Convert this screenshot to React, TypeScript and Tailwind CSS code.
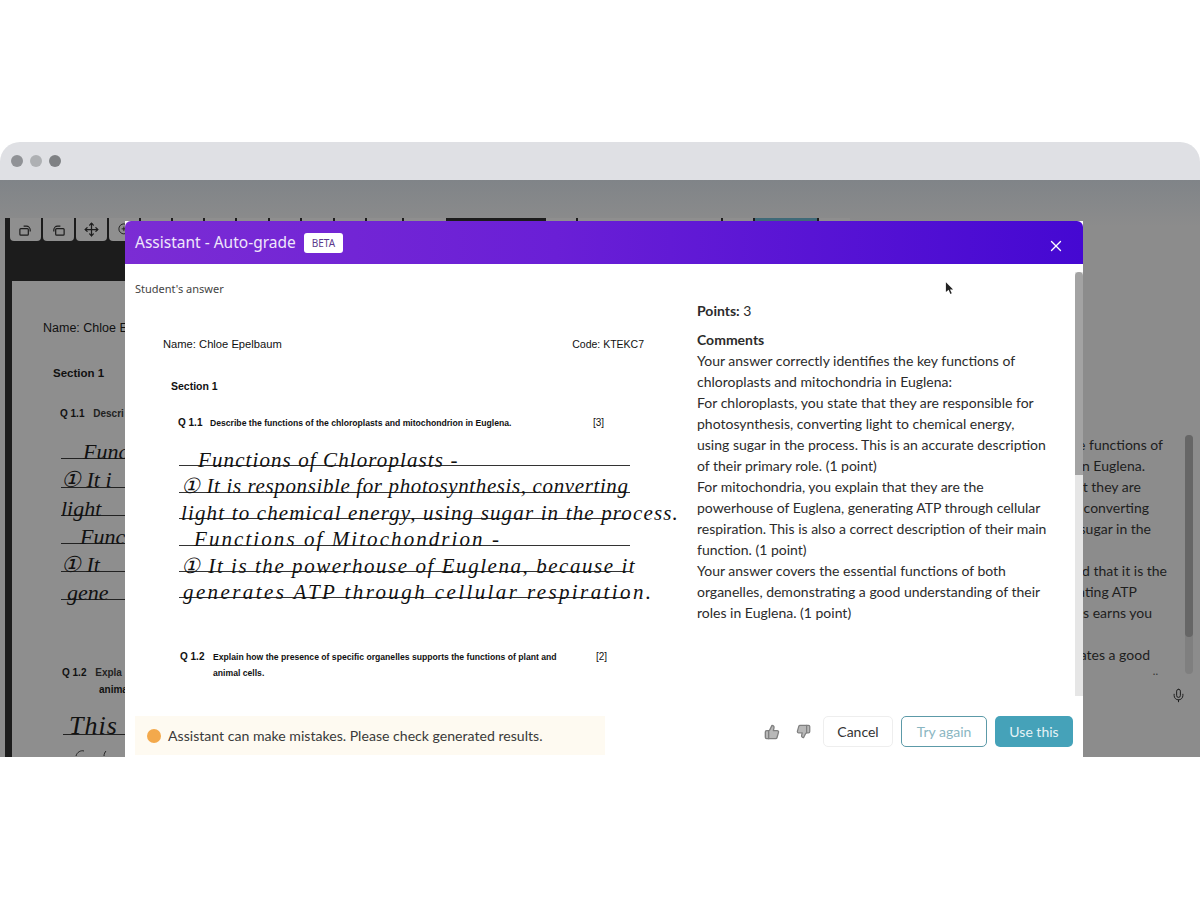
import React from 'react';
import { ThumbsDown, ThumbsUp, X, Mic, Move, ZoomIn } from 'lucide-react';

const COMMENTS = [
    'Your answer correctly identifies the key functions of',
    'chloroplasts and mitochondria in Euglena:',
    'For chloroplasts, you state that they are responsible for',
    'photosynthesis, converting light to chemical energy,',
    'using sugar in the process. This is an accurate description',
    'of their primary role. (1 point)',
    'For mitochondria, you explain that they are the',
    'powerhouse of Euglena, generating ATP through cellular',
    'respiration. This is also a correct description of their main',
    'function. (1 point)',
    'Your answer covers the essential functions of both',
    'organelles, demonstrating a good understanding of their',
    'roles in Euglena. (1 point)',
];

const HANDWRITING = [
    { text: 'Functions of Chloroplasts -', className: 'pl-[19px] tracking-[1.1px]' },
    { text: '① It is responsible for photosynthesis, converting', className: 'pl-[2px] tracking-[0.62px]' },
    { text: 'light to chemical energy, using sugar in the process.', className: 'pl-[2px] tracking-[1.15px]' },
    { text: 'Functions of Mitochondrion -', className: 'pl-[15px] tracking-[2.07px]' },
    { text: '① It is the powerhouse of Euglena, because it', className: 'pl-[2px] tracking-[1.55px]' },
    { text: 'generates ATP through cellular respiration.', className: 'pl-[4px] tracking-[2.4px]' },
];

// The lines of the page behind the modal; their left part is hidden by it
const BACKGROUND_RIGHT = [
    { text: 'the functions of', pos: 'top-[256px] right-[37px]' },
    { text: 'in Euglena.', pos: 'top-[277px] right-[55px]' },
    { text: 'that they are', pos: 'top-[298px] right-[59px]' },
    { text: 'converting', pos: 'top-[319px] right-[51px]' },
    { text: 'using sugar in the', pos: 'top-[340px] right-[49px]' },
    { text: 'said that it is the', pos: 'top-[382px] right-[33px]' },
    { text: 'generating ATP', pos: 'top-[403px] right-[63px]' },
    { text: 'this earns you', pos: 'top-[424px] right-[48px]' },
    { text: 'demonstrates a good', pos: 'top-[466px] right-[50px]' },
];

// Tabs of the viewer toolbar; only their top edge shows beside the modal
const TOOLBAR_TABS = [
    { w: 'w-[31px]', tone: 'bg-[#8f8f8f]' },
    { w: 'w-[31px]', tone: 'bg-[#8f8f8f]' },
    { w: 'w-[31px]', tone: 'bg-[#8f8f8f]' },
    { w: 'w-[30px]', tone: 'bg-[#8f8f8f]' },
    { w: 'w-[30px]', tone: 'bg-[#8f8f8f]' },
    { w: 'w-[30px]', tone: 'bg-[#8f8f8f]' },
    { w: 'w-[30px]', tone: 'bg-[#8f8f8f]' },
    { w: 'w-[31px]', tone: 'bg-[#8f8f8f]' },
    { w: 'w-[30px]', tone: 'bg-[#8f8f8f]' },
    { w: 'w-[31px]', tone: 'bg-[#8f8f8f]' },
    { w: 'w-[30px]', tone: 'bg-[#8f8f8f]' },
    { w: 'w-[35px]', tone: 'bg-[#8f8f8f]' },
    { w: 'w-[42px]', tone: 'bg-[#8f8f8f]' },
    { w: 'w-[96px]', tone: 'bg-[#1c1c1c]' },
    { w: 'w-[30px]', tone: 'bg-[#8f8f8f]' },
    { w: 'w-[143px]', tone: 'bg-[#8f8f8f]' },
    { w: 'w-[30px]', tone: 'bg-[#8f8f8f]' },
    { w: 'w-[62px]', tone: 'bg-[#3f6a78]' },
    { w: 'w-[31px]', tone: 'bg-[#8f8f8f]' },
];

const RotateIcon = ({ flip }: { flip?: boolean }) => (
    <svg
        viewBox="0 0 16 16"
        className={`h-[15px] w-[15px] ${flip ? '-scale-x-100' : ''}`}
        fill="none"
        stroke="currentColor"
        strokeWidth="1.3"
    >
        <rect x="2" y="7" width="9" height="7" rx="1" />
        <path d="M6 4.500h3a4 4 0 0 1 4 4V10" />
    </svg>
);

export default function App() {
    return (
        <div className="h-[900px] w-[1200px] overflow-hidden bg-white pt-[142px] font-['Lato',sans-serif]">
            {/* Browser frame */}
            <div className="flex h-[615px] flex-col overflow-hidden rounded-t-[20px]">
                <div className="flex h-[38px] shrink-0 items-center gap-[7px] bg-[#dfe0e4] pl-[11px]">
                    <span className="h-[12px] w-[12px] rounded-full bg-[#909296]" />
                    <span className="h-[12px] w-[12px] rounded-full bg-[#aeb0b3]" />
                    <span className="h-[12px] w-[12px] rounded-full bg-[#7f8184]" />
                </div>

                <div className="relative flex-1 overflow-hidden bg-[linear-gradient(180deg,#808488,#8c8c8c_8%)]">
                    {/* Dimmed app behind the modal */}
                    <div className="absolute top-[38px] bottom-0 left-[5px] flex w-[845px] flex-col overflow-hidden bg-[#1c1c1c]">
                        <div className="flex h-[63px] shrink-0 items-start gap-[2px] pl-[5px] text-[#1d1d1d]">
                            {TOOLBAR_TABS.map((tab, i) => (
                                <div
                                    key={i}
                                    className={`flex h-[23px] shrink-0 items-center justify-center rounded-b-[4px] ${tab.w} ${tab.tone}`}
                                >
                                    {i === 0 && <RotateIcon />}
                                    {i === 1 && <RotateIcon flip />}
                                    {i === 2 && <Move size={15} strokeWidth={2} />}
                                    {i === 3 && <ZoomIn size={15} strokeWidth={1.5} />}
                                </div>
                            ))}
                        </div>
                        <div className="ml-[7px] flex-1 bg-[#8e8e8e] font-['Liberation_Sans',sans-serif] text-[#111]">
                            <p className="pt-[38px] pl-[31px] text-[12.5px]">Name: Chloe E</p>
                            <p className="pt-[27px] pl-[41px] text-[11.5px] font-bold">Section 1</p>
                            <p className="pt-[24px] pl-[48px] text-[10px] font-bold">
                                Q 1.1 <span className="ml-[6px] text-[#222]">Descri</span>
                            </p>
                            <div className="pt-[10px] pl-[49px] font-['Liberation_Serif',serif] text-[22px] italic">
                                <p className="h-[28px] border-b border-[#222] pl-[22px] leading-[42px]">Func</p>
                                <p className="h-[28.500px] border-b border-[#222] leading-[42px]">① It i</p>
                                <p className="h-[28.500px] border-b border-[#222] leading-[42px]">light</p>
                                <p className="h-[28px] border-b border-[#222] pl-[19px] leading-[42px]">Func</p>
                                <p className="h-[28px] border-b border-[#222] leading-[42px]">① It</p>
                                <p className="h-[28px] border-b border-[#222] pl-[6px] leading-[42px]">gene</p>
                            </div>
                            <p className="pt-[65px] pl-[50px] text-[10px] font-bold">
                                Q 1.2 <span className="ml-[6px] text-[#222]">Expla</span>
                            </p>
                            <p className="pt-[2px] pl-[87px] text-[10px] font-bold">anima</p>
                            <p className="mt-[10px] ml-[51px] h-[28px] border-b border-[#222] pl-[6px] font-['Liberation_Serif',serif] text-[26px] leading-[38px] tracking-[1px] italic">
                                This
                            </p>
                            {/* Top of the next handwritten line, cut by the frame */}
                            <svg viewBox="0 0 40 8" className="mt-[14px] ml-[62px] h-[8px] w-[40px]" fill="none" stroke="#222" strokeWidth="1">
                                <path d="M2 7c1-4 5-6 8-5M30 7c0-2 1-4 2-5" />
                            </svg>
                        </div>
                    </div>

                    {/* Text on the right of the app */}
                    {BACKGROUND_RIGHT.map((row) => (
                        <p
                            key={row.text}
                            className={`absolute text-[14px] leading-[18px] whitespace-nowrap text-[#1e1e1e] ${row.pos}`}
                        >
                            {row.text}
                        </p>
                    ))}
                    <div className="absolute top-[255px] right-[7px] h-[239px] w-[8px] rounded-full bg-[#7f7f7f]">
                        <div className="h-[202px] w-[8px] rounded-full bg-[#666666]" />
                    </div>
                    <div className="absolute top-[485px] right-[42px] text-[11px] leading-none text-[#333]">..</div>
                    <Mic size={15} strokeWidth={1.6} className="absolute top-[508px] right-[14px] text-[#1d1d1d]" />

                    {/* Modal */}
                    <div className="absolute top-[41px] bottom-0 left-[125px] flex w-[958px] flex-col bg-white">
                        <div className="flex h-[43px] shrink-0 items-center rounded-t-[6px] bg-[linear-gradient(90deg,#7b2cd4,#6a1fd6_45%,#4508d2)] pr-[18px] pl-[10px] text-white">
                            <span className="font-['Noto_Sans',sans-serif] text-[15.5px] leading-none text-[#efe6fb]">
                                Assistant - Auto-grade
                            </span>
                            <span className="ml-[8px] rounded-[3px] bg-white px-[8px] py-[4px] font-['Noto_Sans',sans-serif] text-[10px] leading-[12px] text-[#5b3a8c]">
                                BETA
                            </span>
                            <X size={18} strokeWidth={1.8} className="mt-[6px] ml-auto" />
                        </div>

                        <div className="relative flex min-h-0 flex-1 flex-col">
                            <div className="flex min-h-0 flex-1">
                                {/* Scanned answer sheet */}
                                <div className="w-[562px] shrink-0 pl-[10px]">
                                    <p className="pt-[18px] font-['Noto_Sans',sans-serif] text-[11px] leading-[13px] text-[#444]">
                                        Student's answer
                                    </p>
                                    <div className="font-['Liberation_Sans',sans-serif] text-[#111]">
                                        <div className="flex pt-[42px] pr-[43px] pl-[28px] text-[11.2px] leading-[14px]">
                                            <span>Name: Chloe Epelbaum</span>
                                            <span className="ml-auto text-[10.5px]">Code: KTEKC7</span>
                                        </div>
                                        <p className="pt-[28px] pl-[36px] text-[10.5px] leading-[14px] font-bold">Section 1</p>
                                        <div className="flex pt-[24px] pr-[83px] pl-[43px] text-[8.65px] leading-[12px] font-bold">
                                            <span className="w-[32px] text-[10px]">Q 1.1</span>
                                            <span>Describe the functions of the chloroplasts and mitochondrion in Euglena.</span>
                                            <span className="ml-auto text-[10px] font-normal">[3]</span>
                                        </div>
                                        <div className="ml-[44px] w-[451px] pt-[11px] font-['Liberation_Serif',serif] text-[21px] text-[#111] italic">
                                            {HANDWRITING.map((line) => (
                                                <p
                                                    key={line.text}
                                                    className={`h-[26.400px] border-b border-[#333] leading-[40px] whitespace-nowrap ${line.className}`}
                                                >
                                                    {line.text}
                                                </p>
                                            ))}
                                        </div>
                                        <div className="flex pt-[51px] pr-[80px] pl-[45px] text-[8.65px] leading-[16px] font-bold">
                                            <span className="w-[33px] shrink-0 text-[10px]">Q 1.2</span>
                                            <span className="whitespace-nowrap">
                                                Explain how the presence of specific organelles supports the functions of plant and
                                                <br />
                                                animal cells.
                                            </span>
                                            <span className="ml-auto text-[10px] font-normal">[2]</span>
                                        </div>
                                    </div>
                                </div>

                                {/* Grading result */}
                                <div className="flex-1 pt-[36px] pl-[10px] text-[14px] leading-[21px] text-[#2b2b2b]">
                                    <p>
                                        <span className="font-bold">Points:</span> 3
                                    </p>
                                    <p className="mt-[8px] font-bold">Comments</p>
                                    {COMMENTS.map((line) => (
                                        <p key={line} className="whitespace-nowrap">
                                            {line}
                                        </p>
                                    ))}
                                </div>
                            </div>

                            {/* Footer */}
                            <div className="flex h-[61px] shrink-0 items-start pt-[20px] pr-[10px] pl-[10px]">
                                <div className="flex h-[39px] w-[470px] items-center gap-[7px] bg-[#fefaf1] pl-[12px] text-[14.1px] text-[#3a3a3a]">
                                    <span className="h-[14px] w-[14px] rounded-full bg-[#f3a94c]" />
                                    Assistant can make mistakes. Please check generated results.
                                </div>
                                <ThumbsUp size={16} strokeWidth={2} fill="#b8b8b8" className="mt-[8px] ml-auto text-[#808080]" />
                                <ThumbsDown size={15} strokeWidth={2} fill="#b8b8b8" className="mt-[8px] ml-[16px] text-[#808080]" />
                                <button className="ml-[12px] h-[31px] w-[70px] rounded-[5px] border border-[#eeeeee] text-[14px] text-[#333]">
                                    Cancel
                                </button>
                                <button className="ml-[8px] h-[31px] w-[86px] rounded-[5px] border border-[#5c9aa8] text-[14px] text-[#8ab6c2]">
                                    Try again
                                </button>
                                <button className="ml-[8px] h-[31px] w-[78px] rounded-[5px] bg-[#45a2b9] text-[14px] text-[#e6f3f6]">
                                    Use this
                                </button>
                            </div>

                            {/* Modal scrollbar */}
                            <div className="absolute top-[8px] right-0 h-[424px] w-[8px] bg-[#e6e6e6]">
                                <div className="h-[203px] w-[8px] rounded-t-full bg-[#a3a3a3]" />
                            </div>
                        </div>

                        {/* Cursor */}
                        <svg viewBox="0 0 10 14" className="absolute top-[60px] left-[820px] h-[15px] w-[9px]">
                            <path d="M1 0v11l3-2.500 2 4.500 1.500-.7-2-4.300H9z" fill="#222" />
                        </svg>
                    </div>
                </div>
            </div>
        </div>
    );
}
